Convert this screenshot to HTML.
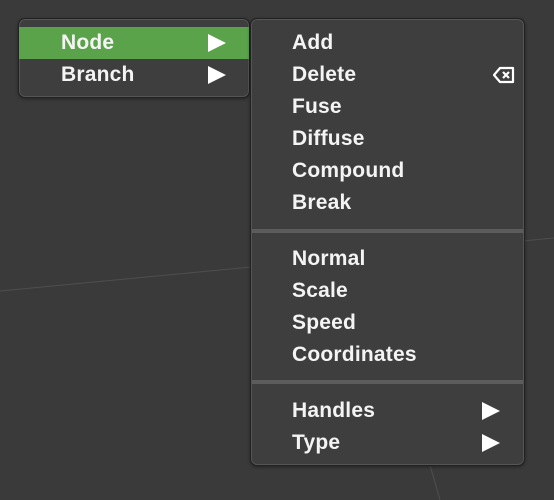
<!DOCTYPE html>
<html><head><style>
body{margin:0;width:554px;height:500px;background:#3a3a3a;position:relative;overflow:hidden;font-family:"Liberation Sans",sans-serif;}
.m{position:absolute;background:#3e3e3e;border:1px solid #222;border-radius:7px;box-shadow:inset 0 0 0 1px #555,0 1px 3px rgba(0,0,0,.4);}
.r{position:absolute;left:0;right:0;height:32px;line-height:32px;color:#f4f4f4;font-size:21px;font-weight:bold;letter-spacing:0.2px;}
.r span{position:absolute;}
.a{position:absolute;width:0;height:0;border-left:18px solid #fff;border-top:9px solid transparent;border-bottom:9px solid transparent;top:7px;}
.sep{position:absolute;left:1px;right:1px;height:4px;background:#5c5c5c;}
</style></head><body>
<svg width="554" height="500" style="position:absolute;left:0;top:0">
<line x1="0" y1="291" x2="554" y2="238" stroke="#4e4e4e" stroke-width="1"/>
<line x1="430" y1="465" x2="440" y2="500" stroke="#4e4e4e" stroke-width="1"/>
</svg>
<div class="m" style="left:18px;top:18px;width:230px;height:78px;">
<div class="r" style="top:8px;background:#5aa34a;"><span style="left:42px">Node</span><div class="a" style="left:189px"></div></div>
<div class="r" style="top:40px;"><span style="left:42px">Branch</span><div class="a" style="left:189px"></div></div>
</div>
<div class="m" style="left:250px;top:18px;width:273px;height:446px;">
<div class="r" style="top:8px"><span style="left:41px">Add</span></div>
<div class="r" style="top:40px"><span style="left:41px">Delete</span>
<svg style="position:absolute;left:242px;top:7px" width="22" height="18" viewBox="0 0 22 18"><path d="M7 2H20V16H7L1 9Z" fill="none" stroke="#fff" stroke-width="2.2" stroke-linejoin="round"/><path d="M10 6L16 12M16 6L10 12" stroke="#fff" stroke-width="2.2"/></svg></div>
<div class="r" style="top:72px"><span style="left:41px">Fuse</span></div>
<div class="r" style="top:104px"><span style="left:41px">Diffuse</span></div>
<div class="r" style="top:136px"><span style="left:41px">Compound</span></div>
<div class="r" style="top:168px"><span style="left:41px">Break</span></div>
<div class="sep" style="top:210px"></div>
<div class="r" style="top:224px"><span style="left:41px">Normal</span></div>
<div class="r" style="top:256px"><span style="left:41px">Scale</span></div>
<div class="r" style="top:288px"><span style="left:41px">Speed</span></div>
<div class="r" style="top:320px"><span style="left:41px">Coordinates</span></div>
<div class="sep" style="top:361px"></div>
<div class="r" style="top:376px"><span style="left:41px">Handles</span><div class="a" style="left:231px"></div></div>
<div class="r" style="top:408px"><span style="left:41px">Type</span><div class="a" style="left:231px"></div></div>
</div>
</body></html>
